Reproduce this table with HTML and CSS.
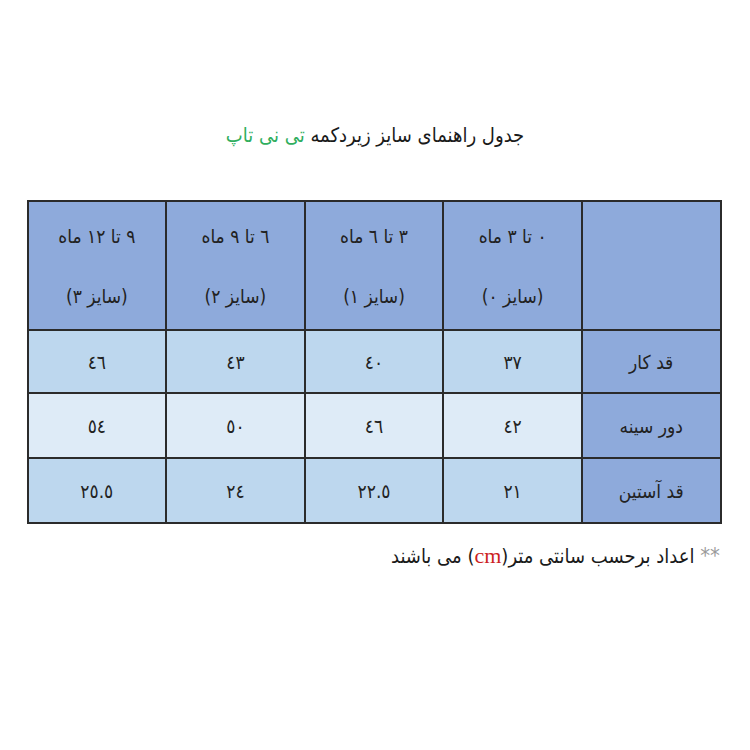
FILE: index.html
```html
<!DOCTYPE html>
<html lang="fa" dir="rtl">
<head>
<meta charset="utf-8">
<title>جدول راهنمای سایز</title>
<link rel="stylesheet" href="styles.css">
</head>
<body>
<main class="page">
  <h1 class="title">جدول راهنمای سایز زیردکمه <span class="brand">تی نی تاپ</span></h1>
  <table class="chart">
    <tr class="head">
      <th class="label"></th>
      <th><span class="line">٠ تا ٣ ماه</span><span class="line">(سایز ٠)</span></th>
      <th><span class="line">٣ تا ٦ ماه</span><span class="line">(سایز ١)</span></th>
      <th><span class="line">٦ تا ٩ ماه</span><span class="line">(سایز ٢)</span></th>
      <th><span class="line">٩ تا ١٢ ماه</span><span class="line">(سایز ٣)</span></th>
    </tr>
    <tr class="row dark first">
      <td class="label">قد کار</td>
      <td>٣٧</td><td>٤٠</td><td>٤٣</td><td>٤٦</td>
    </tr>
    <tr class="row light">
      <td class="label">دور سینه</td>
      <td>٤٢</td><td>٤٦</td><td>٥٠</td><td>٥٤</td>
    </tr>
    <tr class="row dark">
      <td class="label">قد آستین</td>
      <td>٢١</td><td>٢٢.٥</td><td>٢٤</td><td>٢٥.٥</td>
    </tr>
  </table>
  <p class="note"><span class="stars">**</span> اعداد برحسب سانتی متر(<span class="cm">cm</span>) می باشند</p>
</main>
</body>
</html>
```
FILE: styles.css
```css
html, body {
  margin: 0;
  padding: 0;
  background: #ffffff;
}
.page {
  width: 750px;
  height: 750px;
  box-sizing: border-box;
  padding-top: 117px;
  display: flex;
  flex-direction: column;
  align-items: center;
  font-family: "DejaVu Sans Condensed", "DejaVu Sans", sans-serif;
  color: #1a1a1a;
}
.title {
  margin: 0;
  font-size: 20px;
  font-weight: normal;
  line-height: 36px;
  height: 36px;
}
.brand {
  color: #2fae5e;
}
.chart {
  margin-top: 47px;
  margin-right: 2px;
  border-collapse: collapse;
  table-layout: fixed;
  width: 695px;
}
.chart th, .chart td {
  border: 2px solid #2b2b2b;
  padding: 0;
  text-align: center;
  vertical-align: middle;
  font-weight: normal;
  font-size: 19px;
  color: #222;
}
.head th {
  background: #8eaadb;
  height: 127px;
}
.line {
  display: block;
  line-height: 60px;
}
.row td {
  height: 63px;
}
.row.first td {
  height: 61px;
}
.dark td {
  background: #bdd7ee;
}
.light td {
  background: #deebf7;
}
.row td.label {
  background: #8eaadb;
}
.note {
  align-self: flex-start;
  margin: 17px 30px 0 0;
  font-size: 20px;
  line-height: 30px;
  color: #1a1a1a;
}
.stars {
  color: #9a9a9a;
  font-size: 22px;
}
.cm {
  color: #cc1f1f;
  font-family: "Liberation Serif", serif;
  font-size: 22px;
}
```
